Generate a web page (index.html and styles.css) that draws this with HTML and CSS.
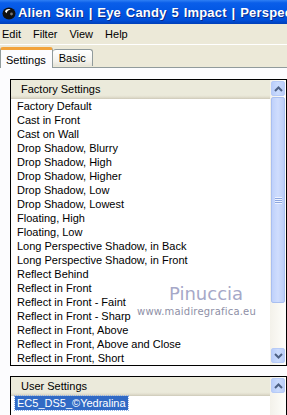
FILE: index.html
```html
<!DOCTYPE html>
<html lang="en">
<head>
  <meta charset="UTF-8">
  <meta name="viewport" content="width=device-width, initial-scale=1.0">
  <title>Eye Candy 5 Impact</title>
  <link rel="stylesheet" href="styles.css">
</head>
<body>
  <div class="window">
    <header class="titlebar">
      <svg class="app-icon" width="14" height="14" viewBox="0 0 14 14" aria-hidden="true">
        <ellipse cx="7" cy="7.5" rx="6.5" ry="6" fill="#111"/>
        <path d="M3 5.5 C4 3 7 2.5 8.5 3.5 C6.5 3.8 5 5 4.6 7.2 Z" fill="#fff"/>
        <circle cx="9.5" cy="8" r="1.4" fill="#777"/>
      </svg>
      <span class="title-text">Alien Skin | Eye Candy 5 Impact | Perspective</span>
    </header>

    <nav class="menubar">
      <span>Edit</span>
      <span>Filter</span>
      <span>View</span>
      <span>Help</span>
    </nav>

    <div class="tabs">
      <div class="tab active">Settings</div>
      <div class="tab">Basic</div>
    </div>

    <main class="panel">
      <section class="listbox factory">
        <div class="list-main">
          <div class="list-header">Factory Settings</div>
          <ul class="list-items">
            <li>Factory Default</li>
            <li>Cast in Front</li>
            <li>Cast on Wall</li>
            <li>Drop Shadow, Blurry</li>
            <li>Drop Shadow, High</li>
            <li>Drop Shadow, Higher</li>
            <li>Drop Shadow, Low</li>
            <li>Drop Shadow, Lowest</li>
            <li>Floating, High</li>
            <li>Floating, Low</li>
            <li>Long Perspective Shadow, in Back</li>
            <li>Long Perspective Shadow, in Front</li>
            <li>Reflect Behind</li>
            <li>Reflect in Front</li>
            <li>Reflect in Front - Faint</li>
            <li>Reflect in Front - Sharp</li>
            <li>Reflect in Front, Above</li>
            <li>Reflect in Front, Above and Close</li>
            <li>Reflect in Front, Short</li>
          </ul>
          <div class="watermark">
            <span class="wm-name">Pinuccia</span>
            <span class="wm-url">www.maidiregrafica.eu</span>
          </div>
        </div>
        <div class="scrollbar">
          <div class="sb-button">
            <svg width="9" height="6" viewBox="0 0 9 6"><path d="M1 5 L4.5 1.5 L8 5" fill="none" stroke="#4d6185" stroke-width="2"/></svg>
          </div>
          <div class="sb-thumb"><span class="grip"></span></div>
          <div class="sb-track"></div>
          <div class="sb-button">
            <svg width="9" height="6" viewBox="0 0 9 6"><path d="M1 1 L4.5 4.5 L8 1" fill="none" stroke="#4d6185" stroke-width="2"/></svg>
          </div>
        </div>
      </section>

      <section class="listbox user">
        <div class="list-main">
          <div class="list-header">User Settings</div>
          <ul class="list-items">
            <li><span class="selected">EC5_DS5_©Yedralina</span></li>
          </ul>
        </div>
        <div class="scrollbar">
          <div class="sb-button">
            <svg width="9" height="6" viewBox="0 0 9 6"><path d="M1 5 L4.5 1.5 L8 5" fill="none" stroke="#4d6185" stroke-width="2"/></svg>
          </div>
          <div class="sb-track"></div>
        </div>
      </section>
    </main>
  </div>
</body>
</html>
```

FILE: styles.css
```css
/* Reset */
* {
  margin: 0;
  padding: 0;
  box-sizing: border-box;
}

body {
  font-family: "Liberation Sans", Arial, sans-serif;
  font-size: 11px;
  color: #000;
  background-color: #fcfcfe;
  width: 287px;
  height: 415px;
  overflow: hidden;
}

.window {
  display: flex;
  flex-direction: column;
  height: 415px;
}

/* Barra de título */
.titlebar {
  flex: none;
  height: 24px;
  display: flex;
  align-items: center;
  gap: 2px;
  padding: 1px 0 0 2px;
  background: linear-gradient(#2f7ff4 0, #0a5ee9 12%, #0055e3 55%, #004ed8 85%, #003fb8 100%);
  white-space: nowrap;
  overflow: hidden;
}

.app-icon {
  flex: none;
}

.title-text {
  color: #ffffff;
  font-weight: bold;
  font-size: 13px;
  letter-spacing: 0.2px;
  word-spacing: 1px;
  text-shadow: 1px 1px 0 #0b2a8a;
}

/* Menu */
.menubar {
  flex: none;
  height: 21px;
  display: flex;
  align-items: center;
  gap: 12px;
  padding: 0 0 1px 2px;
  background-color: #ece9d8;
  border-bottom: 1px solid #ffffff;
}

/* Abas */
.tabs {
  flex: none;
  height: 22px;
  display: flex;
  align-items: flex-end;
  background-color: #ece9d8;
}

.tab {
  height: 17px;
  padding: 0 6px;
  line-height: 16px;
  border: 1px solid #919b9c;
  border-bottom: none;
  border-radius: 3px 3px 0 0;
  background: linear-gradient(#ffffff, #f3f2ec 70%, #e6e4d8);
  margin-bottom: 1px;
}

.tab.active {
  height: 21px;
  margin-bottom: -1px;
  padding: 2px 6px 0 5px;
  background: #fcfcfe;
  border-top: 3px solid #f2a33a;
  position: relative;
  z-index: 1;
}

.tab.active + .tab {
  border-left: none;
}

/* Painel */
.panel {
  flex: 1;
  min-height: 0;
  overflow: hidden;
  border-top: 1px solid #919b9c;
  padding: 11px 0 0 10px;
  background-color: #fcfcfe;
}

.listbox {
  display: flex;
  width: 277px;
  border: 1px solid #000;
  background-color: #ffffff;
}

.listbox.factory {
  height: 287px;
}

.listbox.user {
  margin-top: 10px;
  height: 60px;
}

.list-main {
  flex: 1;
  position: relative;
  overflow: hidden;
}

.list-header {
  height: 19px;
  line-height: 19px;
  padding-left: 10px;
  background: linear-gradient(#ebeadb 0, #ebeadb 80%, #e2dfcf 90%, #cdc9b8 100%);
}

.list-items {
  list-style: none;
}

.list-items li {
  height: 14px;
  line-height: 14px;
  padding-left: 6px;
  font-size: 11px;
  white-space: nowrap;
}

.selected {
  display: inline-block;
  margin-left: -2px;
  padding: 0 2px;
  background-color: #316ac5;
  color: #ffffff;
  outline: 1px dotted #8fb0e8;
}

/* Marca d'água sobre a lista */
.watermark {
  position: absolute;
  left: 126px;
  top: 205px;
  display: flex;
  flex-direction: column;
  align-items: flex-start;
  line-height: 1;
  pointer-events: none;
}

.wm-name {
  margin-left: 32px;
  font-family: "DejaVu Sans", sans-serif;
  font-size: 18px;
  color: #a6a8c8;
}

.wm-url {
  margin-top: 4px;
  font-family: "DejaVu Sans", sans-serif;
  font-size: 10px;
  letter-spacing: 0.2px;
  color: #8e8fa6;
}

/* Barra de rolagem estilo XP */
.scrollbar {
  flex: none;
  width: 16px;
  display: flex;
  flex-direction: column;
  padding: 1px 1px 2px 1px;
  background: linear-gradient(90deg, #f3f1ea, #fefefb);
}

.sb-button {
  flex: none;
  height: 15px;
  display: flex;
  align-items: center;
  justify-content: center;
  border: 1px solid #b7cbf7;
  border-radius: 2px;
  background: linear-gradient(90deg, #b9cdfa, #cbdcfd 50%, #bbcdf8);
}

.sb-thumb {
  flex: none;
  height: 206px;
  margin-top: 1px;
  display: flex;
  align-items: center;
  justify-content: center;
  border: 1px solid #a9bff0;
  border-radius: 2px;
  background: linear-gradient(90deg, #bfd1fb, #cfddfd 50%, #bbcdf8);
}

.grip {
  width: 7px;
  height: 7px;
  background: repeating-linear-gradient(#eef3ff 0, #eef3ff 1px, #8ca6e0 1px, #8ca6e0 2px);
}

.sb-track {
  flex: 1;
}
```
